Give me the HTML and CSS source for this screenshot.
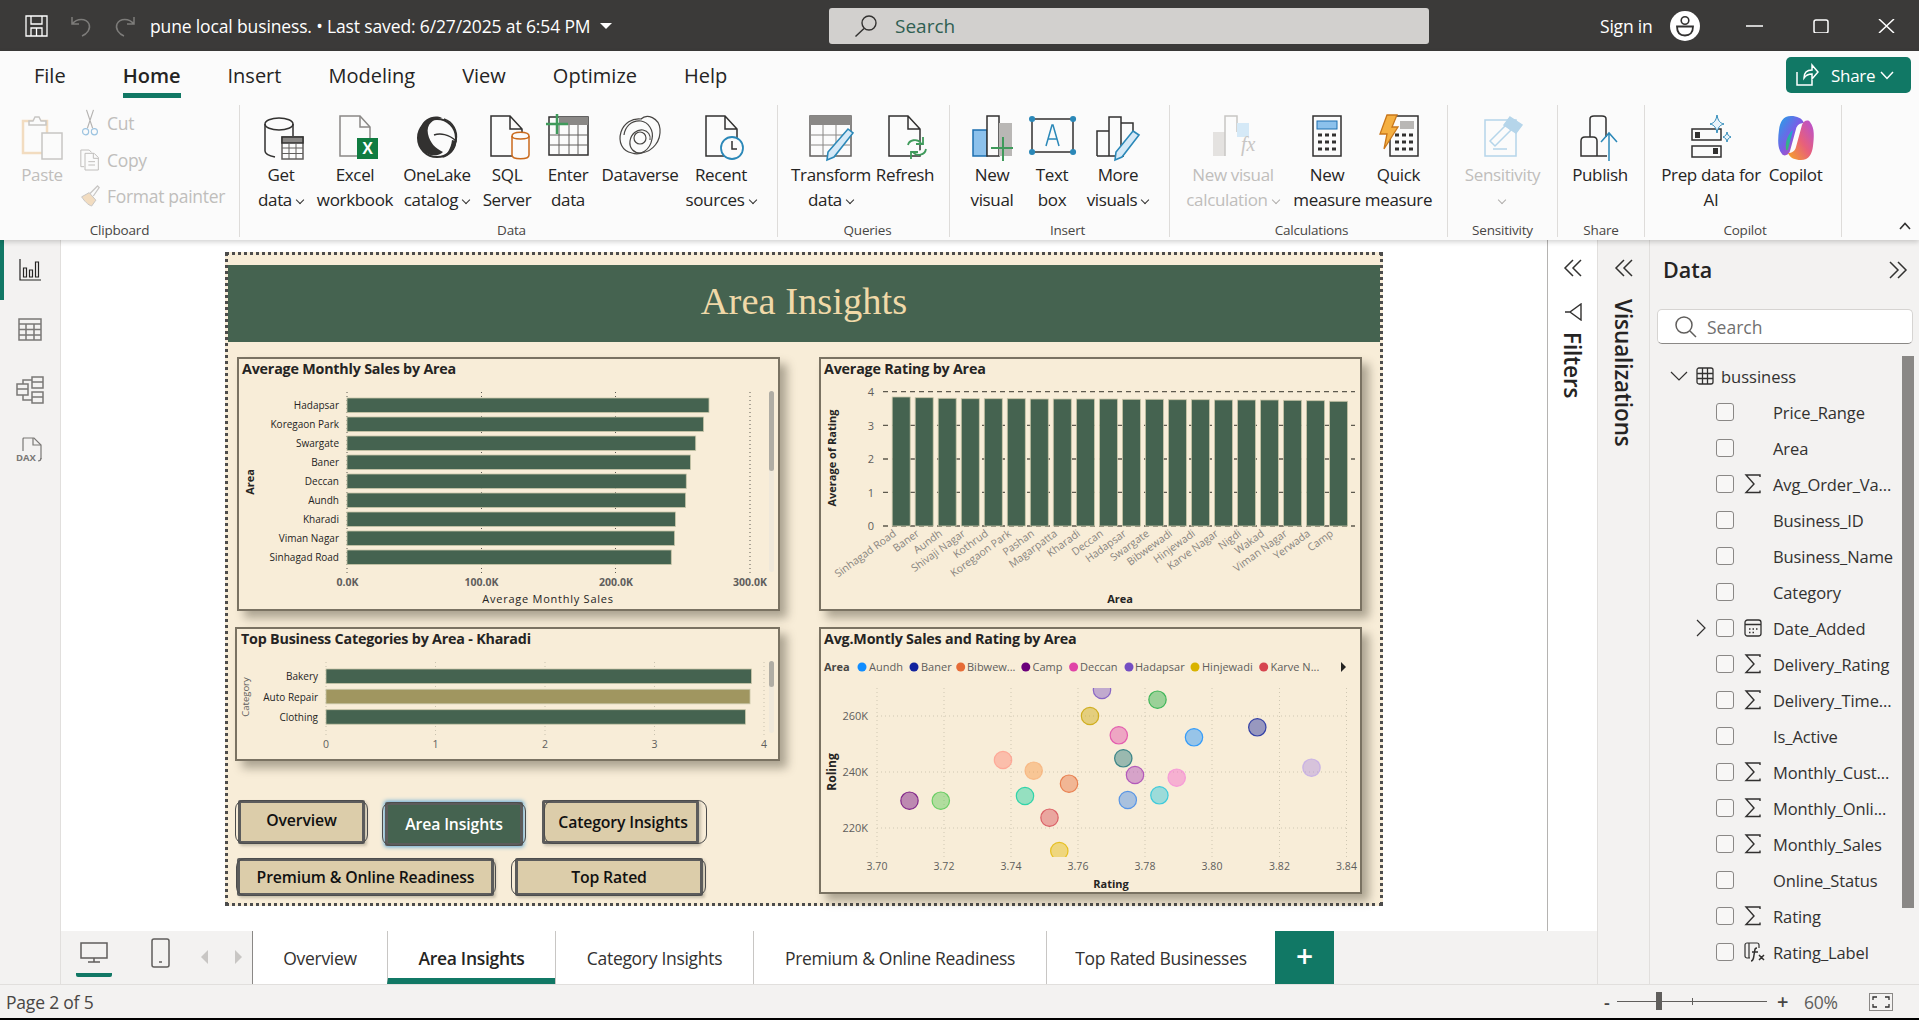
FILE: index.html
```html
<!DOCTYPE html>
<html lang="en">
<head>
    <meta charset="UTF-8">
    <title>pune local business - Power BI Desktop</title>
    <link rel="stylesheet" href="styles.css">
</head>
<body>
<svg class="defs" width="0" height="0">
    <symbol id="sigma" viewBox="0 0 18 20"><path d="M16 3V1H2l8 9-8 8.500h14v-2" fill="none" stroke="#323130" stroke-width="1.400"/></symbol>
    <linearGradient id="copA" x1="0" y1="0" x2="1" y2="1"><stop offset="0" stop-color="#1fa5e8"/><stop offset=".5" stop-color="#7b5ce6"/><stop offset="1" stop-color="#e8478f"/></linearGradient>
    <linearGradient id="copB" x1="0" y1="1" x2="1" y2="0"><stop offset="0" stop-color="#f5a623"/><stop offset=".5" stop-color="#e8607a"/><stop offset="1" stop-color="#b44fd6"/></linearGradient>
    <linearGradient id="copC" x1="0" y1="1" x2="1" y2="0"><stop offset="0" stop-color="#3fb56b"/><stop offset="1" stop-color="#19a8e0"/></linearGradient>
</svg>

<header class="titlebar">
    <svg class="tb-save" viewBox="0 0 23 22" fill="none" stroke="#fff" stroke-width="1.300"><path d="M1 1h21v20H1zM6 1v8h11V1M6 21v-8h11v8M11.500 13v8"/></svg>
    <svg class="tb-undo" viewBox="0 0 21 22" fill="none" stroke="#7d7c7a" stroke-width="1.500"><path d="M1 2v7h7M1 9c5-6 14-6 17 0 2 5-2 10-7 12"/></svg>
    <svg class="tb-redo" viewBox="0 0 21 22" fill="none" stroke="#7d7c7a" stroke-width="1.500"><path d="M20 2v7h-7M20 9C15 3 6 3 3 9c-2 5 2 10 7 12"/></svg>
    <span class="tb-title">pune local business. • Last saved: 6/27/2025 at 6:54 PM</span>
    <span class="tb-caret"></span>
    <div class="tb-search">
        <svg class="tb-search-ic" viewBox="0 0 24 22" fill="none" stroke="#323130" stroke-width="1.400"><circle cx="15" cy="8" r="7"/><path d="M10 13.500 1.500 21.500"/></svg>
        <span>Search</span>
    </div>
    <span class="tb-signin">Sign in</span>
    <svg class="tb-avatar" viewBox="0 0 30 30"><circle cx="15" cy="15" r="15" fill="#fff"/><circle cx="15" cy="9.500" r="3.800" fill="none" stroke="#323130" stroke-width="1.600"/><path d="M7 15.500h16c0 6-3 9-8 9s-8-3-8-9z" fill="none" stroke="#323130" stroke-width="1.800"/></svg>
    <svg class="tb-min" viewBox="0 0 17 14"><path d="M0 7h17" stroke="#fff" stroke-width="1.500"/></svg>
    <svg class="tb-max" viewBox="0 0 16 14"><rect x="1" y="1" width="14" height="13" rx="2" fill="none" stroke="#fff" stroke-width="1.500"/></svg>
    <svg class="tb-close" viewBox="0 0 17 14"><path d="M1 0l15 14M16 0L1 14" stroke="#fff" stroke-width="1.500"/></svg>
</header>

<section class="ribbon">
    <nav class="rb-tabs">
        <span class="rb-tab rb-tab-file">File</span>
        <span class="rb-tab active">Home</span>
        <span class="rb-tab">Insert</span>
        <span class="rb-tab">Modeling</span>
        <span class="rb-tab">View</span>
        <span class="rb-tab">Optimize</span>
        <span class="rb-tab">Help</span>
        <button class="share-btn">
            <svg class="share-ic" viewBox="0 0 24 24" fill="none" stroke="#fff" stroke-width="1.500"><path d="M2 9v13h15v-5M9 15c0-5 3-8 8-8V2l6 7-6 7v-5c-4 0-6 1-8 4z"/></svg>
            <span>Share</span>
            <svg class="share-chev" viewBox="0 0 14 9" fill="none" stroke="#fff" stroke-width="1.500"><path d="M1 1l6 6.500L13 1"/></svg>
        </button>
    </nav>
    <div class="rb-body">
        <div class="rb-group g-clipboard">
            <div class="rb-items">
                <div class="rb-item w-paste disabled">
                    <svg class="ic" viewBox="0 0 46 46" fill="none"><rect x="4" y="6" width="24" height="32" stroke="#f2dcc0" stroke-width="2.500"/><path d="M10 6h4l2-4h4l2 4h5v4H10z" fill="#fbfbfb" stroke="#c8c6c4" stroke-width="1.500"/><rect x="23" y="18" width="20" height="26" fill="#fbfbfb" stroke="#c8c6c4" stroke-width="1.500"/></svg>
                    <span class="rb-text">Paste</span>
                </div>
                <div class="clip-col">
                    <div class="clip-row"><svg class="ic-sm" viewBox="0 0 20 32" fill="none"><path d="M6 1l7 21M14 1L7 22" stroke="#b5b3b1" stroke-width="1.300"/><circle cx="5" cy="26" r="3.500" stroke="#9cc3e0" stroke-width="1.300"/><circle cx="15" cy="26" r="3.500" stroke="#9cc3e0" stroke-width="1.300"/></svg><span>Cut</span></div>
                    <div class="clip-row"><svg class="ic-sm" viewBox="0 0 24 26" fill="none" stroke="#c0bebc" stroke-width="1.200"><path d="M5 21H1V1h10l3 3"/><path d="M6 5h11l5 5v15H6zM16 5v6h6M10 15h8M10 19h8"/></svg><span>Copy</span></div>
                    <div class="clip-row"><svg class="ic-sm" viewBox="0 0 24 26" fill="none"><path d="M2 14l9-5 8 9-5 7c-4-1-9-6-12-11z" fill="#f2dcc0" stroke="#c8c6c4" stroke-width="1.200"/><path d="M12 10l9-9 2 2-7 10" stroke="#c8c6c4" stroke-width="1.500"/></svg><span>Format painter</span></div>
                </div>
            </div>
            <div class="rb-label">Clipboard</div>
        </div>

        <div class="rb-group g-data">
            <div class="rb-items">
                <div class="rb-item w70">
                    <svg class="ic" viewBox="0 0 46 46" fill="none" stroke="#323130" stroke-width="1.500"><ellipse cx="21" cy="9" rx="14" ry="6"/><path d="M7 9v27c0 3 5 5 10 6M35 9v12"/><rect x="24" y="22" width="21" height="22" fill="#fbfbfb" stroke="#605e5c"/><path d="M24 22h21v6H24z" fill="#8a8886"/><path d="M24 33h21M24 38.500h21M31 28v16M38 28v16" stroke="#605e5c" stroke-width="1"/></svg>
                    <span class="rb-text">Get<br>data<i class="chev"></i></span>
                </div>
                <div class="rb-item w78">
                    <svg class="ic" viewBox="0 0 46 46" fill="none"><path d="M8 1h20l10 11v29H8z" stroke="#8a8886" stroke-width="1.500"/><path d="M28 1v11h10" stroke="#8a8886" stroke-width="1.500"/><rect x="25" y="23" width="21" height="21" fill="#107c41"/><text x="35.500" y="39" class="ic-x">X</text></svg>
                    <span class="rb-text">Excel<br>workbook</span>
                </div>
                <div class="rb-item w86">
                    <svg class="ic" viewBox="0 0 46 46" fill="none"><circle cx="23" cy="23" r="19" stroke="#323130" stroke-width="2"/><path d="M7 12C9 4 20-1 28 3c-9 1-16 6-14 16 2 9 7 14 15 18-5 5-16 5-22-4C3 27 4 18 7 12z" fill="#323130"/><path d="M30 4c9 3 14 12 12 22-7-7-16-8-22-6" stroke="#323130" stroke-width="1.500"/><path d="M42 26c1 8-7 16-14 17 5-4 9-9 10-18z" fill="#323130"/></svg>
                    <span class="rb-text">OneLake<br>catalog<i class="chev"></i></span>
                </div>
                <div class="rb-item w54">
                    <svg class="ic" viewBox="0 0 46 46" fill="none"><path d="M7 1h19l12 13v27H7zM26 1v13h12" stroke="#323130" stroke-width="1.500"/><path d="M28 21c0-5 17-5 17 0v19c0 5-17 5-17 0z" fill="#fbfbfb" stroke="#ca6a1c" stroke-width="1.500"/><path d="M28 21c0 4 17 4 17 0" stroke="#ca6a1c" stroke-width="1.500"/></svg>
                    <span class="rb-text">SQL<br>Server</span>
                </div>
                <div class="rb-item w68">
                    <svg class="ic" viewBox="0 0 46 46" fill="none"><rect x="4" y="2" width="39" height="38" stroke="#323130" stroke-width="1.500"/><path d="M14 2h29v8H14z" fill="#8a8886"/><path d="M4 20h39M4 30h39M14 10v30M24 10v30M33 10v30" stroke="#605e5c"/><path d="M12-1v20M1 9h22" stroke="#3f9a5b" stroke-width="2.500"/></svg>
                    <span class="rb-text">Enter<br>data</span>
                </div>
                <div class="rb-item w76">
                    <svg class="ic" viewBox="0 0 46 46" fill="none" stroke="#484644" stroke-width="1.200"><path d="M15 38C5 36 1 27 4 17 7 8 15 3 24 4c6-6 18-1 19 10 1 12-7 22-18 24-8 1-13-5-12-12 1-7 7-12 13-11 5 1 8 5 7 10"/><path d="M15 38c9 3 18-3 20-14 2-9-4-17-11-18-10-1-16 6-17 14"/><circle cx="23" cy="23" r="6"/></svg>
                    <span class="rb-text">Dataverse</span>
                </div>
                <div class="rb-item w86">
                    <svg class="ic" viewBox="0 0 46 46" fill="none"><path d="M8 1h19l12 13v27H8zM27 1v13h12" stroke="#323130" stroke-width="1.500"/><circle cx="34" cy="33" r="11" fill="#fbfbfb" stroke="#2b88b8" stroke-width="1.800"/><path d="M34 26v8h5" stroke="#323130" stroke-width="1.500"/></svg>
                    <span class="rb-text">Recent<br>sources<i class="chev"></i></span>
                </div>
            </div>
            <div class="rb-label">Data</div>
        </div>

        <div class="rb-group g-queries">
            <div class="rb-items">
                <div class="rb-item w90">
                    <svg class="ic" viewBox="0 0 46 46" fill="none"><rect x="2" y="1" width="41" height="40" stroke="#605e5c" stroke-width="1.500"/><path d="M2 1h41v9H2z" fill="#8a8886"/><path d="M2 20h41M2 30h41M15 10v31M28 10v31" stroke="#8a8886"/><path d="M40 14l5 4-19 24-7 3 1-8z" fill="#d5e9f7" stroke="#2b88b8" stroke-width="1.600"/></svg>
                    <span class="rb-text">Transform<br>data<i class="chev"></i></span>
                </div>
                <div class="rb-item w58">
                    <svg class="ic" viewBox="0 0 46 46" fill="none"><path d="M7 1h19l12 13v27H7zM26 1v13h12" stroke="#323130" stroke-width="1.500"/><path d="M26 30c1-5 9-7 13-2M44 34c-1 6-9 8-13 3" stroke="#3f9a5b" stroke-width="1.800" fill="#fbfbfb"/><path d="M41 22v7h-7M29 44v-7h7" stroke="#3f9a5b" stroke-width="1.800"/></svg>
                    <span class="rb-text">Refresh</span>
                </div>
            </div>
            <div class="rb-label">Queries</div>
        </div>

        <div class="rb-group g-insert">
            <div class="rb-items">
                <div class="rb-item w52">
                    <svg class="ic" viewBox="0 0 46 46" fill="none"><rect x="4" y="15" width="14" height="26" fill="#8cc1ec" stroke="#1c6fb0" stroke-width="1.500"/><rect x="18" y="1" width="12" height="40" fill="#fbfbfb" stroke="#323130" stroke-width="1.500"/><rect x="30" y="8" width="13" height="33" fill="#b9b7b5"/><path d="M34 22v24M22 33h22" stroke="#3f9a5b" stroke-width="2"/></svg>
                    <span class="rb-text">New<br>visual</span>
                </div>
                <div class="rb-item w68">
                    <svg class="ic" viewBox="0 0 46 46" fill="none"><rect x="3" y="4" width="41" height="33" stroke="#323130" stroke-width="1.500"/><path d="M3 4h.1M44 4h.1M3 37h.1M44 37h.1" stroke="#2b88b8" stroke-width="6" stroke-linecap="round"/><path d="M17 31l6-21h1l6 21M19 24h9" stroke="#2b88b8" stroke-width="1.500"/></svg>
                    <span class="rb-text">Text<br>box</span>
                </div>
                <div class="rb-item w64">
                    <svg class="ic" viewBox="0 0 46 46" fill="none" stroke="#323130" stroke-width="1.500"><path d="M2 41V16h12M14 41V2h12v39M26 8h12v10M2 41h27"/><path d="M38 16l6 4-17 22-7 3 1-8z" fill="#d5e9f7" stroke="#2b88b8" stroke-width="1.600"/></svg>
                    <span class="rb-text">More<br>visuals<i class="chev"></i></span>
                </div>
            </div>
            <div class="rb-label">Insert</div>
        </div>

        <div class="rb-group g-calc">
            <div class="rb-items">
                <div class="rb-item w114 disabled">
                    <svg class="ic" viewBox="0 0 46 46" fill="none"><rect x="3" y="17" width="12" height="24" fill="#e4e2e0"/><path d="M15 41V1h12v16" stroke="#c8c6c4" stroke-width="1.500"/><path d="M27 8h12v14H27z" fill="#d5e9f7"/><text x="31" y="36" class="ic-fx">fx</text></svg>
                    <span class="rb-text">New visual<br>calculation<i class="chev"></i></span>
                </div>
                <div class="rb-item w74">
                    <svg class="ic" viewBox="0 0 46 46" fill="none"><rect x="9" y="1" width="28" height="40" fill="#fbfbfb" stroke="#323130" stroke-width="1.500"/><rect x="13" y="6" width="20" height="8" fill="#8cc1ec" stroke="#1c6fb0"/><path d="M14 20h4M21 20h4M28 20h4M14 27h4M21 27h4M28 27h4M14 34h4M21 34h4M28 34h4" stroke="#323130" stroke-width="3"/></svg>
                    <span class="rb-text">New<br>measure</span>
                </div>
                <div class="rb-item w69">
                    <svg class="ic" viewBox="0 0 46 46" fill="none"><rect x="14" y="1" width="28" height="40" fill="#fbfbfb" stroke="#323130" stroke-width="1.500"/><rect x="24" y="6" width="14" height="8" fill="#b9b7b5"/><path d="M19 20h4M26 20h4M33 20h4M19 27h4M26 27h4M33 27h4M19 34h4M26 34h4M33 34h4" stroke="#323130" stroke-width="3"/><path d="M11 0h10l-5 12h6L8 34l3-15H4z" fill="#f5b042" stroke="#c8761a" stroke-width="1.300"/></svg>
                    <span class="rb-text">Quick<br>measure</span>
                </div>
            </div>
            <div class="rb-label">Calculations</div>
        </div>

        <div class="rb-group g-sens">
            <div class="rb-items">
                <div class="rb-item w109 disabled">
                    <svg class="ic" viewBox="0 0 46 46" fill="none" stroke="#b5d5ea" stroke-width="1.500"><path d="M5 5h31v36H5z"/><path d="M10 26l16-16 5 5-16 16zM13 34h14" /><path d="M30 2l12 8-6 8-12-8z" fill="#b5d5ea"/></svg>
                    <span class="rb-text">Sensitivity<br><i class="chev chev-solo"></i></span>
                </div>
            </div>
            <div class="rb-label">Sensitivity</div>
        </div>

        <div class="rb-group g-share">
            <div class="rb-items">
                <div class="rb-item w84">
                    <svg class="ic" viewBox="0 0 46 46" fill="none" stroke="#323130" stroke-width="1.500"><path d="M4 41V26c0-3 1-4 4-4h8c2 0 4 1 4 4v15zM13 22V4c0-2 1-3 4-3h8c2 0 4 1 4 3v18M20 41h10"/><path d="M32 46V18M24 27l8-9 8 9" stroke="#2b88b8"/></svg>
                    <span class="rb-text">Publish</span>
                </div>
            </div>
            <div class="rb-label">Share</div>
        </div>

        <div class="rb-group g-copilot">
            <div class="rb-items">
                <div class="rb-item w124">
                    <svg class="ic" viewBox="0 0 46 46" fill="none"><rect x="4" y="14" width="29" height="11" stroke="#323130" stroke-width="1.500"/><rect x="7" y="17" width="5" height="6" fill="#323130"/><rect x="4" y="31" width="29" height="11" stroke="#323130" stroke-width="1.500"/><rect x="25" y="33" width="5" height="6" fill="#323130"/><path d="M29 0c1 6 3 8 7 9-4 1-6 3-7 9-1-6-3-8-7-9 4-1 6-3 7-9zM39 17c.5 3 1.500 4 4 5-2.500 1-3.500 2-4 5-.5-3-1.500-4-4-5 2.500-1 3.500-2 4-5z" fill="#eaf4fb" stroke="#2b88b8"/></svg>
                    <span class="rb-text">Prep data for<br>AI</span>
                </div>
                <div class="rb-item w45">
                    <svg class="ic" viewBox="0 0 46 46"><path d="M18 1c-8 0-11 6-12 14-1 8-2 18 3 24 2 3 7 1 8-3l6-22c1-4 4-6 8-6-2-5-7-7-13-7z" fill="url(#copA)"/><path d="M28 45c8 0 11-6 12-14 1-8 2-18-3-24-2-3-7-1-8 3l-6 22c-1 4-4 6-8 6 2 5 7 7 13 7z" fill="url(#copB)"/><path d="M13 28c1-6 4-11 7-13l-5 19c-1 3-3 1-2-6z" fill="url(#copC)"/></svg>
                    <span class="rb-text">Copilot</span>
                </div>
            </div>
            <div class="rb-label">Copilot</div>
        </div>
    </div>
    <svg class="rb-collapse" viewBox="0 0 12 8" fill="none" stroke="#323130" stroke-width="1.600"><path d="M1 7l5-5.500L11 7"/></svg>
</section>

<main class="main">
    <aside class="rail">
        <div class="rail-btn active">
            <svg class="rail-ic" viewBox="0 0 22 22" fill="none" stroke="#252423" stroke-width="1.200"><path d="M1 0v21h21M4.500 9h3v9h-3zM10.500 11h3v7h-3zM16.500 3h3v15h-3z"/></svg>
        </div>
        <div class="rail-btn">
            <svg class="rail-ic-lg" viewBox="0 0 24 24" fill="none" stroke="#7a7876" stroke-width="1.500"><path d="M1 1h22v21H1zM1 6h22M1 11.500h22M1 17h22M8 6v16M16 6v16"/></svg>
        </div>
        <div class="rail-btn">
            <svg class="rail-ic-xl" viewBox="0 0 28 28" fill="none" stroke="#7a7876" stroke-width="1.500"><path d="M1 8h11v11H1zM1 13h11M16 1h11v11H16zM16 6h11M16 16h11v11H16zM16 21h11M7 8V4h9M7 19v5h9"/></svg>
        </div>
        <div class="rail-btn">
            <svg class="rail-ic-dax" viewBox="0 0 28 26" fill="none" stroke="#7a7876" stroke-width="1.200"><path d="M7 14V2c0-1 1-1 1-1h10l7 7v14"/><path d="M17 1v7h8M25 21c0 2-1 3-3 3"/><text x="0" y="24" class="rail-dax">DAX</text></svg>
        </div>
    </aside>

    <div class="center">
        <div class="center-top">
            <div class="canvas-wrap">
                <div class="report">
                    <div class="report-head">Area Insights</div>
                    <div class="report-body">
                        <div class="col-left">
                            <section class="card card-sales">
                                <h3 class="card-title">Average Monthly Sales by Area</h3>
                                <svg class="chart" width="539" height="228" viewBox="239 381 539 228">
                                    <g class="grid-v">
                                        <path d="M347 392v181M481.500 392v181M615.500 392v181M750 392v181"/>
                                    </g>
                                    <g class="bars">
                                        <rect x="347" y="398" width="362" height="14.500"/>
                                        <rect x="347" y="417" width="356.600" height="14.500"/>
                                        <rect x="347" y="436" width="348.700" height="14.500"/>
                                        <rect x="347" y="455" width="343.500" height="14.500"/>
                                        <rect x="347" y="474" width="339.300" height="14.500"/>
                                        <rect x="347" y="493" width="338.600" height="14.500"/>
                                        <rect x="347" y="512" width="328.400" height="14.500"/>
                                        <rect x="347" y="531" width="327.600" height="14.500"/>
                                        <rect x="347" y="550" width="324.300" height="14.500"/>
                                    </g>
                                    <g class="cat-label">
                                        <text x="339" y="409">Hadapsar</text>
                                        <text x="339" y="428">Koregaon Park</text>
                                        <text x="339" y="447">Swargate</text>
                                        <text x="339" y="466">Baner</text>
                                        <text x="339" y="485">Deccan</text>
                                        <text x="339" y="504">Aundh</text>
                                        <text x="339" y="523">Kharadi</text>
                                        <text x="339" y="542">Viman Nagar</text>
                                        <text x="339" y="561">Sinhagad Road</text>
                                    </g>
                                    <g class="val-label bold">
                                        <text x="347.500" y="586">0.0K</text>
                                        <text x="481.500" y="586">100.0K</text>
                                        <text x="616" y="586">200.0K</text>
                                        <text x="750" y="586">300.0K</text>
                                    </g>
                                    <text class="axis-title spaced" x="548" y="603">Average Monthly Sales</text>
                                    <text class="axis-title" transform="translate(254 482) rotate(-90)">Area</text>
                                    <rect class="scroll-track" x="769" y="391" width="5" height="181" rx="2.500"/>
                                    <rect class="scroll-thumb" x="769" y="391" width="5" height="80" rx="2.500"/>
                                </svg>
                            </section>

                            <section class="card card-cats">
                                <h3 class="card-title pad4">Top Business Categories by Area - Kharadi</h3>
                                <svg class="chart" width="541" height="108" viewBox="237 651 541 108">
                                    <g class="grid-v faint">
                                        <path d="M326 662v73M435.500 662v73M545 662v73M654.500 662v73M764 662v73"/>
                                    </g>
                                    <rect class="bar-plain" x="326" y="669" width="425.400" height="14.500"/>
                                    <rect class="bar-gold" x="326" y="689.300" width="424" height="14.500"/>
                                    <rect class="bar-plain" x="326" y="709.700" width="419.400" height="14.500"/>
                                    <g class="cat-label">
                                        <text x="318" y="680">Bakery</text>
                                        <text x="318" y="701">Auto Repair</text>
                                        <text x="318" y="721">Clothing</text>
                                    </g>
                                    <g class="val-label">
                                        <text x="326" y="748">0</text>
                                        <text x="435.500" y="748">1</text>
                                        <text x="545" y="748">2</text>
                                        <text x="654.500" y="748">3</text>
                                        <text x="764" y="748">4</text>
                                    </g>
                                    <text class="axis-thin" transform="translate(249 697) rotate(-90)">Category</text>
                                    <rect class="scroll-track" x="769" y="661" width="5" height="72" rx="2.500"/>
                                    <rect class="scroll-thumb" x="769" y="661" width="5" height="26" rx="2.500"/>
                                </svg>
                            </section>

                            <div class="nav-row nav-row-one">
                                <button class="nav-btn nb-overview">Overview</button>
                                <button class="nav-btn nb-area">Area Insights</button>
                                <button class="nav-btn nb-category">Category Insights</button>
                            </div>
                            <div class="nav-row nav-row-two">
                                <button class="nav-btn nb-premium">Premium &amp; Online Readiness</button>
                                <button class="nav-btn nb-top">Top Rated</button>
                            </div>
                        </div>

                        <div class="col-right">
                            <section class="card card-rating">
                                <h3 class="card-title">Average Rating by Area</h3>
                                <svg class="chart" width="539" height="228" viewBox="821 381 539 228">
                                    <g class="grid-h">
                                        <path d="M883 391.700h472M883 425.300h472M883 459h472M883 492.300h472M883 526h472"/>
                                    </g>
                                    <g class="bars">
                                        <rect x="892.200" y="397" width="18" height="129"/>
                                        <rect x="915.200" y="397.700" width="18" height="128.300"/>
                                        <rect x="938.200" y="398.300" width="18" height="127.700"/>
                                        <rect x="961.300" y="398.700" width="18" height="127.300"/>
                                        <rect x="984.300" y="398.700" width="18" height="127.300"/>
                                        <rect x="1007.300" y="398.700" width="18" height="127.300"/>
                                        <rect x="1030.300" y="399" width="18" height="127"/>
                                        <rect x="1053.300" y="399" width="18" height="127"/>
                                        <rect x="1076.400" y="399" width="18" height="127"/>
                                        <rect x="1099.400" y="399" width="18" height="127"/>
                                        <rect x="1122.400" y="399.300" width="18" height="126.700"/>
                                        <rect x="1145.400" y="399.300" width="18" height="126.700"/>
                                        <rect x="1168.400" y="399.700" width="18" height="126.300"/>
                                        <rect x="1191.500" y="399.700" width="18" height="126.300"/>
                                        <rect x="1214.500" y="400" width="18" height="126"/>
                                        <rect x="1237.500" y="400" width="18" height="126"/>
                                        <rect x="1260.500" y="400" width="18" height="126"/>
                                        <rect x="1283.500" y="400.300" width="18" height="125.700"/>
                                        <rect x="1306.600" y="400.700" width="18" height="125.300"/>
                                        <rect x="1329.600" y="401.300" width="18" height="124.700"/>
                                    </g>
                                    <g class="val-label end">
                                        <text x="874" y="396">4</text>
                                        <text x="874" y="430">3</text>
                                        <text x="874" y="463">2</text>
                                        <text x="874" y="497">1</text>
                                        <text x="874" y="530">0</text>
                                    </g>
                                    <g class="slant-label">
                                        <text transform="translate(897 535) rotate(-36)">Sinhagad Road</text>
                                        <text transform="translate(920 535) rotate(-36)">Baner</text>
                                        <text transform="translate(943 535) rotate(-36)">Aundh</text>
                                        <text transform="translate(966 535) rotate(-36)">Shivaji Nagar</text>
                                        <text transform="translate(989 535) rotate(-36)">Kothrud</text>
                                        <text transform="translate(1012 535) rotate(-36)">Koregaon Park</text>
                                        <text transform="translate(1035 535) rotate(-36)">Pashan</text>
                                        <text transform="translate(1058 535) rotate(-36)">Magarpatta</text>
                                        <text transform="translate(1081 535) rotate(-36)">Kharadi</text>
                                        <text transform="translate(1104 535) rotate(-36)">Deccan</text>
                                        <text transform="translate(1127 535) rotate(-36)">Hadapsar</text>
                                        <text transform="translate(1150 535) rotate(-36)">Swargate</text>
                                        <text transform="translate(1173 535) rotate(-36)">Bibwewadi</text>
                                        <text transform="translate(1196 535) rotate(-36)">Hinjewadi</text>
                                        <text transform="translate(1219 535) rotate(-36)">Karve Nagar</text>
                                        <text transform="translate(1242 535) rotate(-36)">Nigdi</text>
                                        <text transform="translate(1265 535) rotate(-36)">Wakad</text>
                                        <text transform="translate(1288 535) rotate(-36)">Viman Nagar</text>
                                        <text transform="translate(1311 535) rotate(-36)">Yerwada</text>
                                        <text transform="translate(1334 535) rotate(-36)">Camp</text>
                                    </g>
                                    <text class="axis-title" x="1120" y="603">Area</text>
                                    <text class="axis-title" transform="translate(836 458) rotate(-90)">Average of Rating</text>
                                </svg>
                            </section>

                            <section class="card card-scatter">
                                <h3 class="card-title">Avg.Montly Sales and Rating by Area</h3>
                                <svg class="chart" width="539" height="241" viewBox="821 651 539 241">
                                    <clipPath id="plotClip"><rect x="870" y="688" width="485" height="169"/></clipPath>
                                    <g class="legend">
                                        <text class="legend-head" x="824" y="671">Area</text>
                                        <circle cx="862" cy="667" r="4.500" fill="#118dff"/><text x="869" y="671">Aundh</text>
                                        <circle cx="914" cy="667" r="4.500" fill="#12239e"/><text x="921" y="671">Baner</text>
                                        <circle cx="960.700" cy="667" r="4.500" fill="#e66c37"/><text x="967" y="671">Bibwew...</text>
                                        <circle cx="1025.800" cy="667" r="4.500" fill="#6b007b"/><text x="1032.500" y="671">Camp</text>
                                        <circle cx="1073.600" cy="667" r="4.500" fill="#e044a7"/><text x="1080" y="671">Deccan</text>
                                        <circle cx="1129" cy="667" r="4.500" fill="#744ec2"/><text x="1135" y="671">Hadapsar</text>
                                        <circle cx="1195" cy="667" r="4.500" fill="#d9b300"/><text x="1202" y="671">Hinjewadi</text>
                                        <circle cx="1263.700" cy="667" r="4.500" fill="#d64550"/><text x="1270.500" y="671">Karve N...</text>
                                        <path d="M1341 662l5 5-5 5z" fill="#252423"/>
                                    </g>
                                    <g class="grid-dots">
                                        <path d="M877 688v169M944 688v169M1011 688v169M1078 688v169M1145 688v169M1212 688v169M1279.500 688v169M1346.500 688v169M877 716h470M877 772h470M877 828h470"/>
                                    </g>
                                    <g clip-path="url(#plotClip)" class="dots">
                                        <circle cx="1102" cy="690" r="8.700" fill="#744ec2" stroke="#744ec2"/>
                                        <circle cx="1157.500" cy="699.700" r="8.700" fill="#1aab40" stroke="#1aab40"/>
                                        <circle cx="1090" cy="716" r="8.700" fill="#c9a400" stroke="#c9a400"/>
                                        <circle cx="1118.800" cy="735.300" r="8.700" fill="#e044a7" stroke="#e044a7"/>
                                        <circle cx="1194" cy="737.300" r="8.700" fill="#118dff" stroke="#118dff"/>
                                        <circle cx="1257.300" cy="727.300" r="8.700" fill="#12239e" stroke="#12239e"/>
                                        <circle cx="1123.300" cy="758.300" r="8.700" fill="#197278" stroke="#197278"/>
                                        <circle cx="1003" cy="760" r="8.700" fill="#ff7f6e" stroke="#ff9f8e"/>
                                        <circle cx="1033.700" cy="770.700" r="8.700" fill="#f8923a" stroke="#f8b27a"/>
                                        <circle cx="1135" cy="775" r="8.700" fill="#a63fb5" stroke="#a63fb5"/>
                                        <circle cx="1176.700" cy="777.700" r="8.700" fill="#f45cc8" stroke="#f68cd8"/>
                                        <circle cx="1311.500" cy="767.700" r="8.700" fill="#a98ae0" stroke="#c0a8e8"/>
                                        <circle cx="1069" cy="783.700" r="8.700" fill="#e66c37" stroke="#e66c37"/>
                                        <circle cx="1025" cy="796" r="8.700" fill="#0dd0a0" stroke="#0dd0a0"/>
                                        <circle cx="1159.400" cy="795.300" r="8.700" fill="#1cc4dc" stroke="#1cc4dc"/>
                                        <circle cx="1127.800" cy="800" r="8.700" fill="#3c86e8" stroke="#3c86e8"/>
                                        <circle cx="909.500" cy="800.700" r="8.700" fill="#6b007b" stroke="#6b007b"/>
                                        <circle cx="940.800" cy="800.700" r="8.700" fill="#4fc84f" stroke="#4fc84f"/>
                                        <circle cx="1049.500" cy="817.700" r="8.700" fill="#d64550" stroke="#d64550"/>
                                        <circle cx="1059.300" cy="851" r="8.700" fill="#e3b800" stroke="#e3b800"/>
                                    </g>
                                    <g class="val-label end">
                                        <text x="868" y="720">260K</text>
                                        <text x="868" y="776">240K</text>
                                        <text x="868" y="832">220K</text>
                                    </g>
                                    <g class="val-label">
                                        <text x="877" y="870">3.70</text>
                                        <text x="944" y="870">3.72</text>
                                        <text x="1011" y="870">3.74</text>
                                        <text x="1078" y="870">3.76</text>
                                        <text x="1145" y="870">3.78</text>
                                        <text x="1212" y="870">3.80</text>
                                        <text x="1279.500" y="870">3.82</text>
                                        <text x="1346.500" y="870">3.84</text>
                                    </g>
                                    <text class="axis-title" x="1111" y="888">Rating</text>
                                    <text class="axis-title axis-big" transform="translate(836 772) rotate(-90)">Roling</text>
                                </svg>
                            </section>
                        </div>
                    </div>
                </div>
            </div>
            <aside class="pane-filters">
                <svg class="pane-chev" viewBox="0 0 20 18" fill="none" stroke="#323130" stroke-width="1.500"><path d="M10 1L2 9l8 8M18 1l-8 8 8 8"/></svg>
                <svg class="funnel" viewBox="0 0 18 18" fill="none" stroke="#323130" stroke-width="1.400"><path d="M17 1v16L6 9zM6 9H1"/></svg>
                <span class="vert-text">Filters</span>
            </aside>
        </div>
        <nav class="tabbar">
            <div class="view-btn view-desktop">
                <svg class="ic-desktop" viewBox="0 0 28 21" fill="none" stroke="#605e5c" stroke-width="1.500"><path d="M1 1h26v15H1zM14 16v4M8 20h12"/></svg>
            </div>
            <svg class="ic-phone" viewBox="0 0 19 30" fill="none" stroke="#605e5c" stroke-width="1.500"><rect x="1" y="1" width="17" height="28" rx="2"/><path d="M8 24h3"/></svg>
            <svg class="ic-arrow ic-arrow-left" viewBox="0 0 8 14"><path d="M7 0v14L0 7z" fill="#c8c6c4"/></svg>
            <svg class="ic-arrow ic-arrow-right" viewBox="0 0 8 14"><path d="M1 0v14l7-7z" fill="#c8c6c4"/></svg>
            <span class="tab tab-ov">Overview</span>
            <span class="tab tab-ai active">Area Insights</span>
            <span class="tab tab-ci">Category Insights</span>
            <span class="tab tab-pr">Premium &amp; Online Readiness</span>
            <span class="tab tab-tr">Top Rated Businesses</span>
            <span class="tab-add">+</span>
        </nav>
    </div>

    <aside class="pane-viz">
        <svg class="pane-chev" viewBox="0 0 20 18" fill="none" stroke="#323130" stroke-width="1.500"><path d="M10 1L2 9l8 8M18 1l-8 8 8 8"/></svg>
        <span class="vert-text">Visualizations</span>
    </aside>

    <aside class="pane-data">
        <div class="data-head">
            <span>Data</span>
            <svg class="pane-chev" viewBox="0 0 20 18" fill="none" stroke="#323130" stroke-width="1.500"><path d="M2 1l8 8-8 8M10 1l8 8-8 8"/></svg>
        </div>
        <div class="data-search">
            <svg class="data-search-ic" viewBox="0 0 22 22" fill="none" stroke="#605e5c" stroke-width="1.500"><circle cx="9" cy="9" r="8"/><path d="M15 15l6 6"/></svg>
            <span>Search</span>
        </div>
        <div class="tree">
            <div class="tree-table">
                <svg class="tree-chev" viewBox="0 0 18 10" fill="none" stroke="#323130" stroke-width="1.200"><path d="M1 1l8 8 8-8"/></svg>
                <svg class="tree-grid" viewBox="0 0 18 18" fill="none" stroke="#323130" stroke-width="1.300"><rect x="1" y="1" width="16" height="16" rx="2"/><path d="M1 6.500h16M1 11.500h16M6.500 1v16M11.500 1v16"/></svg>
                <span>bussiness</span>
            </div>
            <div class="field"><span class="check"></span><span class="field-ic"></span><span class="field-name">Price_Range</span></div>
            <div class="field"><span class="check"></span><span class="field-ic"></span><span class="field-name">Area</span></div>
            <div class="field"><span class="check"></span><span class="field-ic"><svg class="sigma"><use href="#sigma"/></svg></span><span class="field-name">Avg_Order_Va...</span></div>
            <div class="field"><span class="check"></span><span class="field-ic"></span><span class="field-name">Business_ID</span></div>
            <div class="field"><span class="check"></span><span class="field-ic"></span><span class="field-name">Business_Name</span></div>
            <div class="field"><span class="check"></span><span class="field-ic"></span><span class="field-name">Category</span></div>
            <div class="field field-expand">
                <svg class="field-arrow" viewBox="0 0 10 18" fill="none" stroke="#323130" stroke-width="1.200"><path d="M1 1l8 8-8 8"/></svg>
                <span class="check"></span>
                <span class="field-ic"><svg class="cal" viewBox="0 0 18 18" fill="none" stroke="#323130" stroke-width="1.300"><rect x="1" y="1" width="16" height="16" rx="2.500"/><path d="M1 5.500h16M5 10h1.500M8.500 10H10M12 10h1.500M5 13.500h1.500M8.500 13.500H10"/></svg></span>
                <span class="field-name">Date_Added</span>
            </div>
            <div class="field"><span class="check"></span><span class="field-ic"><svg class="sigma"><use href="#sigma"/></svg></span><span class="field-name">Delivery_Rating</span></div>
            <div class="field"><span class="check"></span><span class="field-ic"><svg class="sigma"><use href="#sigma"/></svg></span><span class="field-name">Delivery_Time...</span></div>
            <div class="field"><span class="check"></span><span class="field-ic"></span><span class="field-name">Is_Active</span></div>
            <div class="field"><span class="check"></span><span class="field-ic"><svg class="sigma"><use href="#sigma"/></svg></span><span class="field-name">Monthly_Cust...</span></div>
            <div class="field"><span class="check"></span><span class="field-ic"><svg class="sigma"><use href="#sigma"/></svg></span><span class="field-name">Monthly_Onli...</span></div>
            <div class="field"><span class="check"></span><span class="field-ic"><svg class="sigma"><use href="#sigma"/></svg></span><span class="field-name">Monthly_Sales</span></div>
            <div class="field"><span class="check"></span><span class="field-ic"></span><span class="field-name">Online_Status</span></div>
            <div class="field"><span class="check"></span><span class="field-ic"><svg class="sigma"><use href="#sigma"/></svg></span><span class="field-name">Rating</span></div>
            <div class="field"><span class="check"></span><span class="field-ic"><svg class="calc-ic" viewBox="0 0 22 20" fill="none" stroke="#323130" stroke-width="1.200"><path d="M6 16H3c-1 0-2-1-2-2V3c0-1 1-2 2-2h10c1 0 2 1 2 2v3M5 1v15"/><path d="M13 6c-2 0-2 1-2.500 4l-1 6c-.5 2-1 3-2.500 3M8 10h6M15 13l5 5M20 13l-5 5" stroke-width="1.500"/></svg></span><span class="field-name">Rating_Label</span></div>
        </div>
        <div class="data-scroll"></div>
    </aside>
</main>

<footer class="statusbar">
    <span class="status-page">Page 2 of 5</span>
    <div class="zoom-ctl">
        <span class="zoom-minus">-</span>
        <div class="zoom-slider"><span class="zoom-thumb"></span><span class="zoom-tick"></span></div>
        <span class="zoom-plus">+</span>
        <span class="zoom-pct">60%</span>
        <svg class="zoom-fit" viewBox="0 0 24 18" fill="none"><rect x=".5" y=".5" width="23" height="17" stroke="#8a8886"/><path d="M4 7V4h4M16 4h4v3M4 11v3h4M16 14h4v-3" stroke="#323130" stroke-width="1.300"/></svg>
    </div>
</footer>
</body>
</html>
```
FILE: styles.css
```css
* {
    box-sizing: border-box;
}

html, body {
    margin: 0;
    height: 100%;
    overflow: hidden;
}

body {
    font-family: "Open Sans", "Noto Sans", sans-serif;
    color: #252423;
    background: #f3f2f1;
    display: flex;
    flex-direction: column;
}

.defs {
    position: absolute;
}

/* title bar */
.titlebar {
    height: 51px;
    flex: none;
    background: #3b3a39;
    color: #fff;
    display: flex;
    align-items: center;
    padding-left: 25px;
}

.tb-save { width: 23px; height: 22px; }
.tb-undo { width: 21px; height: 22px; margin-left: 23px; }
.tb-redo { width: 21px; height: 22px; margin-left: 22px; }

.tb-title {
    margin-left: 15px;
    width: 450px;
    font-size: 17.500px;
    white-space: nowrap;
    letter-spacing: -0.14px;
}

.tb-caret {
    width: 0;
    height: 0;
    border-left: 6px solid transparent;
    border-right: 6px solid transparent;
    border-top: 6px solid #fff;
}

.tb-search {
    width: 600px;
    height: 36px;
    margin-left: 217px;
    background: #d2d0ce;
    border-radius: 3px;
    display: flex;
    align-items: center;
    padding-left: 25px;
    color: #2f5f52;
    font-size: 19px;
}

.tb-search-ic {
    width: 24px;
    height: 22px;
    margin-right: 17px;
}

.tb-signin { margin-left: 171px; width: 70px; font-size: 17.500px; letter-spacing: -0.2px; white-space: nowrap; }
.tb-avatar { width: 30px; height: 30px; }
.tb-min { width: 17px; height: 14px; margin-left: 46px; }
.tb-max { width: 16px; height: 14px; margin-left: 50px; }
.tb-close { width: 17px; height: 14px; margin-left: 49px; }

/* ribbon */
.ribbon {
    height: 189px;
    flex: none;
    background: #fbfbfb;
    position: relative;
    z-index: 2;
    box-shadow: 0 2px 5px rgba(0, 0, 0, 0.18);
}

.rb-tabs {
    height: 54px;
    display: flex;
    gap: 47px;
    padding-left: 34px;
}

.rb-tab {
    height: 47px;
    line-height: 50px;
    font-size: 20px;
    color: #252423;
    border-bottom: 5px solid transparent;
}

.rb-tab-file { margin-right: 10px; }

.rb-tab.active {
    font-weight: 600;
    border-bottom-color: #117865;
}

.share-btn {
    margin-left: auto;
    margin-right: 8px;
    margin-top: 6px;
    width: 125px;
    height: 36px;
    border: 0;
    border-radius: 5px;
    background: #117865;
    color: #fff;
    font-family: inherit;
    font-size: 17px;
    letter-spacing: -0.3px;
    display: flex;
    align-items: center;
    padding: 0 0 0 9px;
}

.share-ic { width: 24px; height: 24px; margin-right: 12px; }
.share-chev { width: 14px; height: 9px; margin-left: 5px; }

.rb-body {
    height: 132px;
    display: flex;
}

.rb-group {
    height: 132px;
    display: flex;
    flex-direction: column;
    border-right: 1px solid #dedcda;
    flex: none;
}

.g-clipboard { width: 240px; }
.g-data { width: 538px; padding-left: 6px; }
.g-queries { width: 172px; padding-left: 8px; }
.g-insert { width: 220px; padding-left: 16px; }
.g-calc { width: 278px; padding-left: 6px; }
.g-sens { width: 110px; }
.g-share { width: 87px; }
.g-copilot { width: 197px; padding-left: 4px; border-right: 1px solid #dedcda; }

.rb-items {
    flex: 1;
    display: flex;
}

.rb-item {
    flex: none;
    display: flex;
    flex-direction: column;
    align-items: center;
    padding-top: 10px;
}

.w45 { width: 45px; }
.w52 { width: 52px; }
.w54 { width: 54px; }
.w58 { width: 58px; }
.w64 { width: 64px; }
.w68 { width: 68px; }
.w69 { width: 69px; }
.w70 { width: 70px; }
.w74 { width: 74px; }
.w76 { width: 76px; }
.w78 { width: 78px; }
.w84 { width: 84px; }
.w86 { width: 86px; }
.w90 { width: 90px; }
.w109 { width: 109px; }
.w114 { width: 114px; }
.w124 { width: 124px; }
.w-paste { width: 68px; margin-left: 8px; }

.ic {
    width: 46px;
    height: 46px;
    flex: none;
    overflow: visible;
}

.ic-x {
    fill: #fff;
    font-family: "Liberation Sans", sans-serif;
    font-size: 16px;
    font-weight: 700;
    text-anchor: middle;
}

.ic-fx {
    fill: #c8c6c4;
    font-family: "Liberation Serif", serif;
    font-size: 20px;
    font-style: italic;
}

.rb-text {
    margin-top: 2px;
    font-size: 17px;
    line-height: 24.500px;
    letter-spacing: -0.35px;
    text-align: center;
    white-space: nowrap;
    color: #252423;
}

.disabled .rb-text,
.clip-row span {
    color: #c0bebc;
}

.chev {
    display: inline-block;
    width: 6px;
    height: 6px;
    margin: 0 1px 3px 5px;
    border-right: 1.500px solid #323130;
    border-bottom: 1.500px solid #323130;
    transform: rotate(45deg);
}

.disabled .chev { border-color: #b0aeac; }
.chev-solo { margin-left: 0; }

.rb-label {
    height: 14px;
    line-height: 14px;
    margin-bottom: 0;
    font-size: 13.500px;
    letter-spacing: -0.2px;
    text-align: center;
    color: #484644;
}

.clip-col {
    display: flex;
    flex-direction: column;
    padding-top: 0;
    margin-left: 4px;
}

.clip-row {
    height: 36.500px;
    display: flex;
    align-items: center;
    font-size: 17.500px;
    letter-spacing: -0.3px;
    white-space: nowrap;
}

.ic-sm {
    width: 20px;
    height: 28px;
    margin-right: 7px;
    flex: none;
}

.rb-collapse {
    position: absolute;
    right: 8px;
    bottom: 10px;
    width: 12px;
    height: 8px;
}

/* main area */
.main {
    flex: 1;
    min-height: 0;
    display: flex;
}

.rail {
    width: 61px;
    flex: none;
    background: #f3f2f1;
    border-right: 1px solid #e1dfdd;
}

.rail-btn {
    height: 60px;
    display: flex;
    align-items: center;
    justify-content: center;
    border-left: 4px solid transparent;
    padding-right: 4px;
}

.rail-btn.active { border-left-color: #117865; }

.rail-ic { width: 22px; height: 22px; margin-bottom: 1px; }
.rail-ic-lg { width: 24px; height: 24px; }
.rail-ic-xl { width: 28px; height: 28px; }
.rail-ic-dax { width: 28px; height: 26px; }

.rail-dax {
    fill: #7a7876;
    stroke: none;
    font-family: "Open Sans", sans-serif;
    font-size: 9.500px;
    font-weight: 700;
}

.center {
    width: 1536px;
    flex: none;
    display: flex;
    flex-direction: column;
}

.center-top {
    flex: 1;
    min-height: 0;
    display: flex;
    background: #fff;
}

.canvas-wrap {
    width: 1487px;
    flex: none;
    display: flex;
    justify-content: center;
    padding-top: 12px;
    border-right: 1px solid #b5b3b1;
}

/* report page */
.report {
    width: 1158px;
    height: 654px;
    background: #f8edd8;
    border: 3px dotted #4c4c4c;
    padding-top: 10px;
}

.report-head {
    height: 77px;
    background: #456350;
    color: #f0d9a8;
    font-family: "Liberation Serif", serif;
    font-size: 38.500px;
    line-height: 73px;
    text-align: center;
}

.report-body {
    display: flex;
    padding: 15px 0 0 7px;
}

.col-left { width: 545px; flex: none; }
.col-right { width: 543px; flex: none; margin-left: 39px; }

.card {
    background: #f8edd8;
    border: 2px solid #7a7262;
    box-shadow: 7px 7px 9px rgba(60, 55, 40, 0.4);
}

.card-sales { height: 254px; margin-left: 2px; }
.card-cats { height: 134px; margin-top: 16px; }
.card-rating { height: 254px; }
.card-scatter { height: 267px; margin-top: 16px; }

.card-title {
    height: 22px;
    margin: 0;
    padding-left: 3px;
    font-size: 14.300px;
    font-weight: 700;
    line-height: 20px;
    letter-spacing: -0.2px;
    color: #252423;
}

.card-title.pad4 { padding-left: 4px; }

.chart {
    display: block;
    font-family: "Open Sans", sans-serif;
}

.grid-v path {
    fill: none;
    stroke: #5c5a52;
    stroke-width: 1;
    stroke-dasharray: 1 3;
}

.grid-v.faint path { stroke: #c9c2ae; }

.grid-h path {
    fill: none;
    stroke: #5e5a4e;
    stroke-width: 1.300;
    stroke-dasharray: 5 4;
}

.grid-dots path {
    fill: none;
    stroke: #cfc7b2;
    stroke-width: 1;
    stroke-dasharray: 1 3;
}

.bars rect,
.bar-plain {
    fill: #456350;
    stroke: #c9c6a8;
    stroke-width: 0.800;
}

.bar-gold {
    fill: #a09660;
    stroke: #c9c6a8;
    stroke-width: 0.800;
}

.dots circle {
    fill-opacity: 0.42;
    stroke-opacity: 0.8;
    stroke-width: 1.200;
}

.cat-label text {
    font-size: 10px;
    text-anchor: end;
    fill: #252423;
}

.val-label text {
    font-size: 10.500px;
    text-anchor: middle;
    fill: #605e5c;
}

.val-label.bold text { font-weight: 700; }
.val-label.end text { text-anchor: end; font-size: 11px; }

.slant-label text {
    font-size: 10.500px;
    text-anchor: end;
    fill: #8a8680;
}

.axis-title {
    font-size: 11px;
    font-weight: 700;
    text-anchor: middle;
    fill: #252423;
}

.axis-title.axis-big { font-size: 12px; }

.axis-title.spaced {
    font-weight: 400;
    letter-spacing: 0.75px;
}

.axis-thin {
    font-size: 9.500px;
    text-anchor: middle;
    fill: #605e5c;
}

.scroll-track { fill: #efe8da; }
.scroll-thumb { fill: #b0ada4; }

.legend text {
    font-size: 11px;
    fill: #605e5c;
}

.legend .legend-head {
    font-weight: 700;
    fill: #484644;
}

/* nav buttons on the report */
.nav-row {
    display: flex;
    align-items: flex-start;
}

.nav-row-one { height: 46px; margin-top: 39px; }
.nav-row-two { margin-top: 12px; }

.nav-btn {
    position: relative;
    height: 44px;
    padding: 0;
    background: #dccdaa;
    border: 3px solid #5c5c5c;
    border-radius: 2px;
    color: #111;
    font-family: "Open Sans", sans-serif;
    font-size: 15.800px;
    font-weight: 600;
    letter-spacing: -0.15px;
    white-space: nowrap;
    box-shadow: 2px 2px 3px rgba(60, 55, 40, 0.25);
}

.nav-btn::after {
    content: "";
    position: absolute;
    top: -3px;
    bottom: -3px;
    left: -6px;
    right: -6px;
    border: 1px solid #4c4c4c;
    border-radius: 9px;
}

.nb-overview { width: 127px; margin-left: 3px; padding-bottom: 4px; }

.nb-area {
    width: 138px;
    margin: 2px 0 0 20px;
    background: #456350;
    color: #fff;
    box-shadow: 0 0 4px 1px #5aa7d8;
}

.nb-category { width: 157px; margin-left: 19px; padding-left: 5px; }
.nb-category::after { left: -1px; right: -11px; }
.nb-premium { width: 257px; height: 38px; margin-left: 2px; }
.nb-premium::after { left: -4px; right: -5px; }
.nb-top { width: 188px; height: 38px; margin-left: 21px; }
.nb-top::after { left: -7px; right: -6px; }

/* side panes */
.pane-filters,
.pane-viz {
    display: flex;
    flex-direction: column;
    align-items: center;
    flex: none;
}

.pane-filters {
    width: 49px;
    background: #fff;
    padding-top: 19px;
}

.pane-viz {
    width: 53px;
    background: #f3f2f1;
    border-left: 1px solid #e1dfdd;
    border-right: 1px solid #e1dfdd;
    padding-top: 19px;
}

.pane-chev {
    width: 20px;
    height: 18px;
    flex: none;
}

.funnel {
    width: 18px;
    height: 18px;
    margin-top: 26px;
    margin-bottom: 11px;
}

.vert-text {
    writing-mode: vertical-rl;
    font-size: 22.500px;
    font-weight: 600;
    letter-spacing: -0.1px;
    color: #252423;
}

.pane-viz .vert-text { margin-top: 22px; }

.pane-data {
    position: relative;
    flex: 1;
    background: #f3f2f1;
    padding-left: 7px;
}

.data-head {
    height: 69px;
    display: flex;
    align-items: center;
    justify-content: space-between;
    padding: 0 11px 10px 6px;
    font-size: 21.500px;
    font-weight: 600;
}

.data-search {
    width: 256px;
    height: 35px;
    background: #fff;
    border: 1px solid #d6d4d2;
    border-bottom-color: #8a8886;
    border-radius: 5px;
    display: flex;
    align-items: center;
    padding-left: 17px;
    color: #707070;
    font-size: 17.500px;
}

.data-search-ic { width: 22px; height: 22px; margin-right: 10px; }

.tree {
    margin-top: 14px;
    font-size: 16.500px;
    color: #323130;
}

.tree-table {
    height: 36px;
    display: flex;
    align-items: center;
    padding-left: 13px;
}

.tree-chev { width: 18px; height: 10px; margin-right: 8px; }
.tree-grid { width: 18px; height: 18px; margin-right: 7px; }

.field {
    height: 36px;
    display: flex;
    align-items: center;
    padding-left: 59px;
}

.field-expand { padding-left: 39px; }

.field-arrow {
    width: 10px;
    height: 18px;
    margin-right: 10px;
}

.check {
    width: 18px;
    height: 18px;
    flex: none;
    border: 1px solid #8a8886;
    border-radius: 3px;
    background: #f8f7f6;
}

.field-ic {
    width: 39px;
    flex: none;
    display: flex;
    justify-content: center;
    padding-right: 1px;
}

.sigma { width: 18px; height: 20px; }
.cal { width: 18px; height: 18px; }
.calc-ic { width: 22px; height: 20px; margin-left: 3px; }

.field-name {
    white-space: nowrap;
    letter-spacing: -0.1px;
}

.data-scroll {
    position: absolute;
    top: 116px;
    right: 5px;
    width: 12px;
    height: 552px;
    background: #8a8886;
}

/* page tabs */
.tabbar {
    height: 53px;
    flex: none;
    display: flex;
    background: #f3f2f1;
    position: relative;
}

.view-btn {
    width: 36px;
    margin-left: 15px;
    border-bottom: 4px solid #117865;
    height: 46px;
    border-radius: 0 0 2px 2px;
    display: flex;
    justify-content: center;
    padding-top: 11px;
}

.ic-desktop { width: 28px; height: 21px; }
.ic-phone { width: 19px; height: 30px; margin: 7px 0 0 39px; }
.ic-arrow { width: 8px; height: 14px; margin-top: 19px; }
.ic-arrow-left { margin-left: 31px; }
.ic-arrow-right { margin-left: 25px; margin-right: 10px; }

.tab {
    height: 53px;
    background: #fff;
    border-left: 1px solid #c8c6c4;
    display: flex;
    align-items: center;
    justify-content: center;
    font-size: 17.500px;
    letter-spacing: -0.3px;
    color: #323130;
}

.tab-ov { width: 135px; border-left-color: #8a8886; }
.tab-ai { width: 168px; }
.tab-ci { width: 198px; }
.tab-pr { width: 293px; }
.tab-tr { width: 229px; }

.tab.active {
    font-weight: 600;
    color: #252423;
    border-bottom: 6px solid #117865;
    padding-top: 6px;
}

.tab-add {
    width: 59px;
    height: 53px;
    background: #117865;
    color: #fff;
    font-size: 30px;
    font-weight: 600;
    line-height: 49px;
    text-align: center;
}

/* status bar */
.statusbar {
    height: 36px;
    flex: none;
    background: #f3f2f1;
    border-top: 1px solid #e1dfdd;
    border-bottom: 2px solid #000;
    display: flex;
    align-items: center;
    justify-content: space-between;
    padding-left: 6px;
    font-size: 17.500px;
    letter-spacing: -0.2px;
    color: #484644;
}

.zoom-ctl {
    display: flex;
    align-items: center;
    margin-right: 26px;
}

.zoom-minus { font-size: 18px; font-weight: 600; width: 10px; }

.zoom-slider {
    position: relative;
    width: 150px;
    height: 1px;
    margin-left: 3px;
    background: #605e5c;
}

.zoom-thumb {
    position: absolute;
    left: 39px;
    top: -9px;
    width: 6px;
    height: 18px;
    background: #605e5c;
}

.zoom-tick {
    position: absolute;
    left: 75px;
    top: -3px;
    width: 1px;
    height: 7px;
    background: #605e5c;
}

.zoom-plus { font-size: 20px; font-weight: 600; width: 14px; margin-left: 10px; }
.zoom-pct { margin-left: 13px; width: 41px; font-size: 17.500px; color: #605e5c; }
.zoom-fit { width: 24px; height: 18px; margin-left: 24px; }
```
